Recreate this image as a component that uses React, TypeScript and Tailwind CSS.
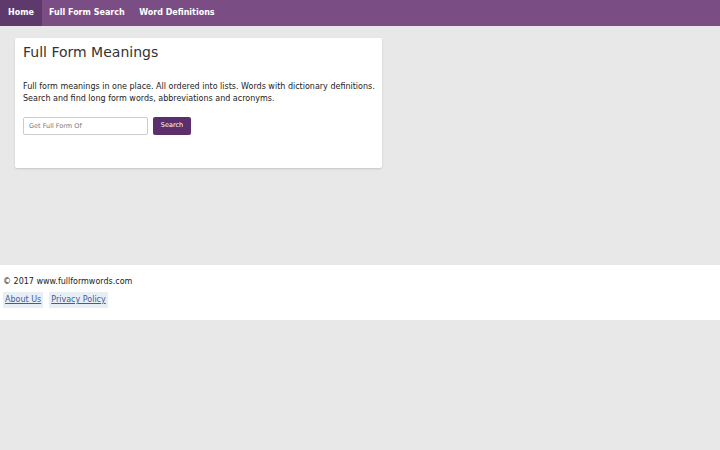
import React from 'react';

export default function App() {
  return (
    <div className="min-h-[450px] bg-[#e8e8e8] font-['DejaVu_Sans',sans-serif] text-[#222]">
      <nav className="h-[26px] bg-[#7a4e85] flex text-white text-[8px] font-bold">
        <a className="px-[8px] flex items-center bg-[#5e3a6c]">Home</a>
        <a className="px-[7px] flex items-center">Full Form Search</a>
        <a className="px-[7.5px] flex items-center">Word Definitions</a>
      </nav>
      <main className="h-[239px] pt-[12px] pl-[15px]">
        <div className="w-[367px] h-[130px] bg-white rounded-[2px] shadow-[0_1px_2px_rgba(0,0,0,0.15)] px-[8px] pt-[5px]">
          <h1 className="text-[14px] text-[#333] leading-[18px]">Full Form Meanings</h1>
          <p className="mt-[20px] text-[8px] leading-[12px] text-[#222] whitespace-nowrap">
            Full form meanings in one place. All ordered into lists. Words with dictionary definitions.
            <br />
            Search and find long form words, abbreviations and acronyms.
          </p>
          <div className="mt-[12px] flex gap-[5px]">
            <input
              placeholder="Get Full Form Of"
              className="w-[125px] h-[18px] border border-[#ccc] rounded-[2px] px-[5px] text-[6.5px] placeholder:text-[#777] outline-none"
            />
            <button className="h-[18px] w-[38px] bg-[#5b2f6b] text-white text-[6.5px] rounded-[2px]">Search</button>
          </div>
        </div>
      </main>
      <footer className="h-[55px] bg-white px-[3px] pt-[11px] text-[8px]">
        <div className="text-[#222]">© 2017 www.fullformwords.com</div>
        <div className="mt-[4px] flex gap-[6px]">
          <a className="bg-[#e8eef6] px-[2px] py-[2px] text-[#3a5f9e] underline">About Us</a>
          <a className="bg-[#e8eef6] px-[2px] py-[2px] text-[#3a5f9e] underline">Privacy Policy</a>
        </div>
      </footer>
    </div>
  );
}
